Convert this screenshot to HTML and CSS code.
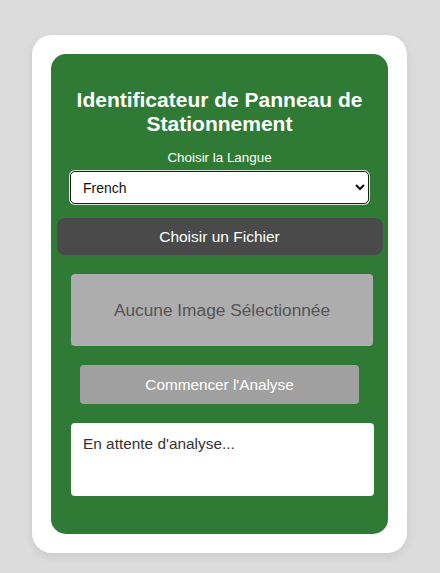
FILE: index.html
```html
<!DOCTYPE html>
<html lang="fr">
<head>
<meta charset="utf-8">
<title>Identificateur de Panneau de Stationnement</title>
<link rel="stylesheet" href="styles.css">
</head>
<body>
<div class="card">
  <div class="panel">
    <h1 class="title">Identificateur de Panneau de Stationnement</h1>
    <label class="label" for="lang">Choisir la Langue</label>
    <select id="lang" class="select">
      <option>French</option>
    </select>
    <button class="file-btn">Choisir un Fichier</button>
    <div class="preview">Aucune Image Sélectionnée</div>
    <button class="analyze-btn">Commencer l'Analyse</button>
    <div class="result">En attente d'analyse...</div>
  </div>
</div>
</body>
</html>
```

FILE: styles.css
```css
html, body {
  margin: 0;
  padding: 0;
}
body {
  background: #dcdcdc;
  font-family: "Liberation Sans", Arial, sans-serif;
  padding-top: 35px;
  height: 573px;
  box-sizing: border-box;
}
.card {
  width: 375px;
  margin: 0 0 0 32px;
  background: #ffffff;
  border-radius: 20px;
  padding: 19px;
  box-sizing: border-box;
  box-shadow: 0 4px 10px rgba(0, 0, 0, 0.08);
}
.panel {
  background: #2f7a35;
  border-radius: 15px;
  padding: 34px 0 38px;
  display: flex;
  flex-direction: column;
  align-items: center;
}
.title {
  margin: 0;
  font-size: 21px;
  line-height: 24px;
  font-weight: bold;
  color: #ffffff;
  text-align: center;
  width: 300px;
}
.label {
  margin-top: 14px;
  font-size: 13.4px;
  line-height: 16px;
  color: #ffffff;
}
.select {
  margin-top: 5px;
  width: 299px;
  height: 33px;
  box-sizing: border-box;
  border: 1px solid #1e1e1e;
  border-radius: 5px;
  box-shadow: 0 0 0 1px #d8e4d8;
  background: #ffffff;
  font-family: "Liberation Sans", Arial, sans-serif;
  font-size: 14px;
  color: #111;
  padding: 0 8px;
}
.file-btn {
  margin-top: 14px;
  width: 326px;
  height: 37px;
  border: none;
  border-radius: 8px;
  background: #4a4a4a;
  color: #ffffff;
  font-family: "Liberation Sans", Arial, sans-serif;
  font-size: 15.5px;
}
.preview {
  margin-top: 19px;
  align-self: flex-start;
  margin-left: 20px;
  width: 302px;
  height: 72px;
  border-radius: 4px;
  background: #adadad;
  color: #555555;
  font-size: 17.3px;
  display: flex;
  align-items: center;
  justify-content: center;
}
.analyze-btn {
  margin-top: 19px;
  width: 279px;
  height: 39px;
  border: none;
  border-radius: 4px;
  background: #a0a0a0;
  color: #ffffff;
  font-family: "Liberation Sans", Arial, sans-serif;
  font-size: 15.3px;
}
.result {
  margin-top: 19px;
  align-self: flex-start;
  margin-left: 20px;
  width: 303px;
  height: 73px;
  box-sizing: border-box;
  padding: 12px;
  border-radius: 4px;
  background: #ffffff;
  color: #333333;
  font-size: 15.4px;
}
```
